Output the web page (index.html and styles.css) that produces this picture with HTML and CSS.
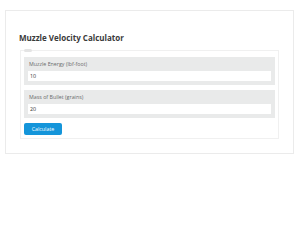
FILE: index.html
```html
<!DOCTYPE html>
<html>
<head>
    <title>Muzzle Velocity Calculator</title>
    <meta name="viewport" content="width=device-width, initial-scale=1.0">
    <link rel="stylesheet" href="styles.css">
</head>
<body>
    <div class="card">
        <h2 class="title">Muzzle Velocity Calculator</h2>

        <div class="calc-form">
            <span class="tab"></span>

            <div class="form-group">
                <label for="energy">Muzzle Energy (lbf-foot)</label>
                <input type="text" id="energy" value="10">
            </div>

            <div class="form-group">
                <label for="mass">Mass of Bullet (grains)</label>
                <input type="text" id="mass" value="20">
            </div>

            <button class="calc-button">Calculate</button>
        </div>
    </div>
</body>
</html>
```

FILE: styles.css
```css
:root {
    --border: #ebebeb;
    --group-bg: #e9eaea;
    --text: #333;
    --label: #6a6a6a;
    --accent: #1495da;
}

body {
    margin: 10px 5px;
    background: #fff;
    font-family: "Open Sans", sans-serif;
    color: var(--text);
}

.card {
    border: 1px solid var(--border);
    box-shadow: 0 0 1px rgba(0, 0, 0, 0.06);
    padding: 0 14px 14px 14px;
}

.title {
    margin: 0 0 6px -1px;
    padding-top: 21px;
    font-size: 8px;
    line-height: 12px;
    font-weight: 700;
    color: #3a3a3a;
}

.calc-form {
    position: relative;
    border: 1px solid #f0f0f0;
    padding: 6px 3px 3px 3px;
}

.tab {
    position: absolute;
    top: -2px;
    left: 3px;
    width: 8px;
    height: 3px;
    border-radius: 2px;
    background: #e4e4e4;
}

.form-group {
    background: var(--group-bg);
    padding: 0 4px 4px 4px;
    margin-bottom: 5px;
}

.form-group label {
    display: block;
    height: 14px;
    line-height: 14px;
    font-size: 5.3px;
    color: var(--label);
    padding-left: 1px;
}

.form-group input {
    display: block;
    width: 100%;
    height: 10px;
    box-sizing: border-box;
    border: none;
    padding: 0 2px;
    background: #fff;
    font-family: inherit;
    font-size: 5.3px;
    color: var(--text);
}

.calc-button {
    display: block;
    width: 38px;
    height: 12px;
    margin-top: 4px;
    padding: 0;
    border: none;
    border-radius: 2px;
    background: var(--accent);
    color: #fff;
    font-family: inherit;
    font-size: 5.3px;
}
```
